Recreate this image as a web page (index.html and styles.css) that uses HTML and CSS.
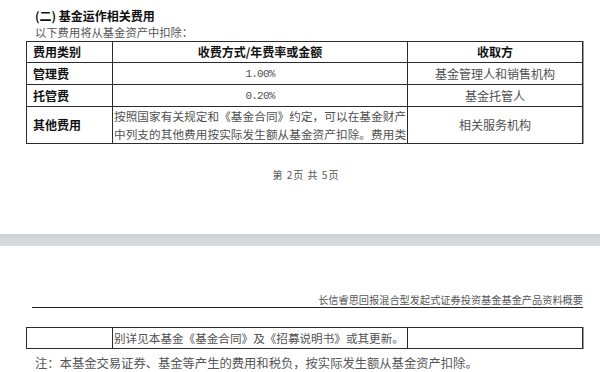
FILE: index.html
```html
<!DOCTYPE html>
<html lang="zh-CN">
<head>
<meta charset="utf-8">
<title>基金运作相关费用</title>
<link rel="stylesheet" href="styles.css">
</head>
<body>
<div class="page page-one">
  <h2 class="title">(二) 基金运作相关费用</h2>
  <p class="lead">以下费用将从基金资产中扣除：</p>
  <table class="fees">
    <colgroup><col class="c1"><col class="c2"><col class="c3"></colgroup>
    <tr class="r-head">
      <th class="left">费用类别</th>
      <th>收费方式/年费率或金额</th>
      <th>收取方</th>
    </tr>
    <tr class="r-one">
      <th class="left">管理费</th>
      <td class="num">1.00%</td>
      <td>基金管理人和销售机构</td>
    </tr>
    <tr class="r-one">
      <th class="left">托管费</th>
      <td class="num">0.20%</td>
      <td>基金托管人</td>
    </tr>
    <tr class="r-two">
      <th class="left">其他费用</th>
      <td class="para"><span class="ln">按照国家有关规定和《基金合同》约定，可以在基金财产</span><span class="ln">中列支的其他费用按实际发生额从基金资产扣除。费用类</span></td>
      <td>相关服务机构</td>
    </tr>
  </table>
  <div class="pager">第 2页 共 5页</div>
</div>
<div class="gap"></div>
<div class="page page-two">
  <div class="running">长信睿思回报混合型发起式证券投资基金基金产品资料概要</div>
  <table class="fees cont">
    <colgroup><col class="c1"><col class="c2"><col class="c3"></colgroup>
    <tr class="r-cont">
      <td></td>
      <td class="para">别详见本基金《基金合同》及《招募说明书》或其更新。</td>
      <td></td>
    </tr>
  </table>
  <p class="note">注：本基金交易证券、基金等产生的费用和税负，按实际发生额从基金资产扣除。</p>
</div>
</body>
</html>
```
FILE: styles.css
```css
html, body {
  margin: 0;
  padding: 0;
  background: #ffffff;
}
body {
  font-family: "Noto Sans CJK SC", "Liberation Sans", sans-serif;
  color: #4a4a4a;
  width: 600px;
}
.page {
  background: #ffffff;
}
.page-one {
  height: 234px;
  padding-top: 7px;
  box-sizing: border-box;
}
.title {
  margin: 0 0 0 35px;
  font-size: 12px;
  line-height: 17px;
  font-weight: 700;
  color: #111111;
}
.lead {
  margin: 0 0 1px 35px;
  font-size: 11.3px;
  line-height: 16px;
  color: #555555;
}
.fees {
  border-collapse: collapse;
  margin-left: 26px;
  width: 556px;
  table-layout: fixed;
  box-shadow: 1px 0 0 #9a9a9a;
}
.c1 { width: 86px; }
.c2 { width: 295px; }
.c3 { width: 175px; }
.fees th,
.fees td {
  border: 1px solid #2b2b2b;
  padding: 0;
  font-size: 12px;
  line-height: 16px;
  text-align: center;
  vertical-align: middle;
  color: #505050;
  font-weight: 400;
}
.fees th {
  font-weight: 700;
  color: #111111;
}
.fees th.left {
  text-align: left;
  padding-left: 6px;
}
.r-head th { height: 20px; }
.r-one th,
.r-one td { height: 21px; }
.r-two th,
.r-two td { height: 36px; }
.r-cont td { height: 20px; }
.fees td.num {
  font-family: "Liberation Mono", "DejaVu Sans Mono", monospace;
  font-size: 11px;
  letter-spacing: -0.8px;
}
.fees td.para {
  text-align: left;
  padding: 0 1px 0 1px;
  font-size: 11.6px;
  line-height: 18px;
  white-space: nowrap;
  overflow: hidden;
}
.ln {
  display: block;
  white-space: normal;
  text-align: justify;
  text-align-last: justify;
  text-justify: inter-character;
}
.pager {
  margin-top: 24px;
  padding-left: 12px;
  text-align: center;
  font-size: 10px;
  line-height: 14px;
  letter-spacing: 1px;
  color: #555555;
}
.gap {
  height: 12px;
  background: linear-gradient(#cfd0d3, #dcdde0);
}
.page-two {
  padding-top: 47px;
  height: 126px;
  box-sizing: border-box;
}
.running {
  margin-left: 32px;
  width: 551px;
  text-align: right;
  font-size: 10.2px;
  line-height: 14px;
  color: #555555;
  border-bottom: 1px solid #222222;
}
.cont {
  margin-top: 19px;
}
.note {
  margin: 6px 0 0 35px;
  font-size: 12.3px;
  line-height: 16px;
  color: #555555;
}
```
